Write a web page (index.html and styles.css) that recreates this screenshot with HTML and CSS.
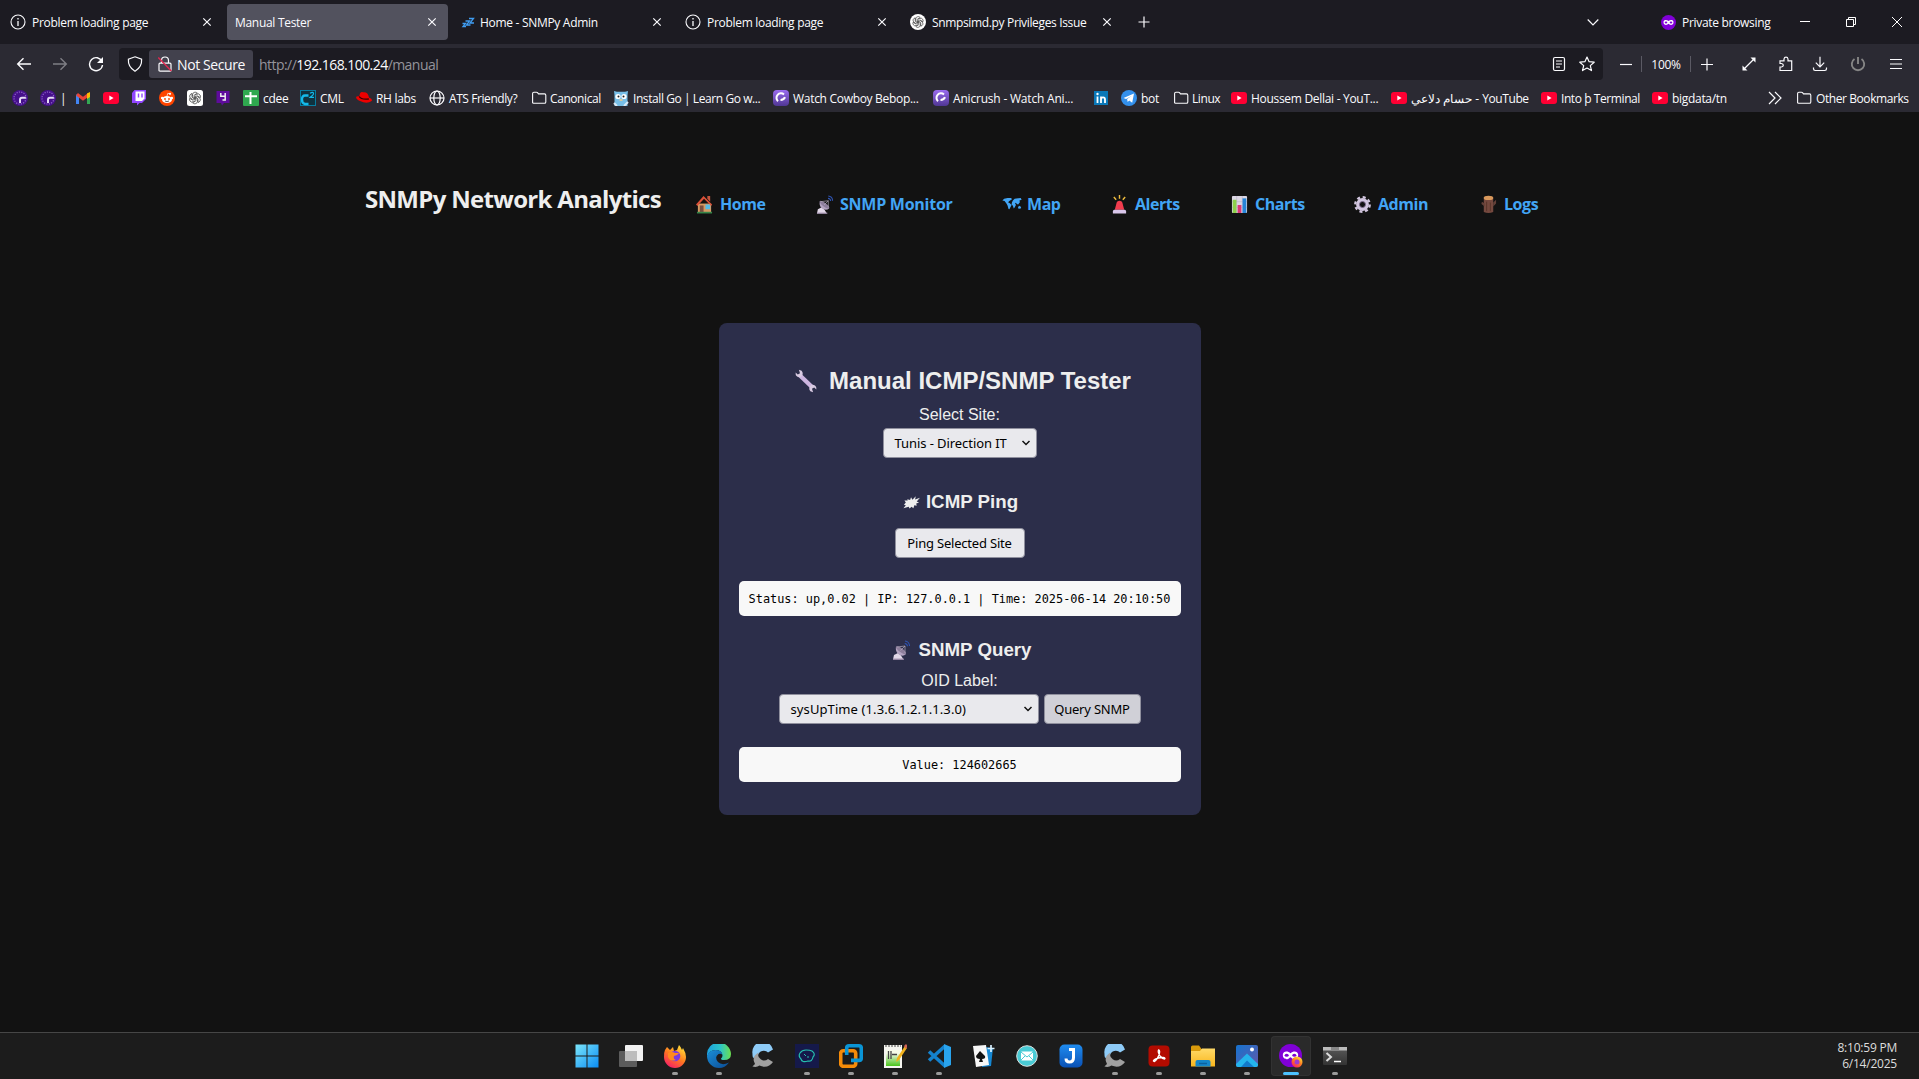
FILE: index.html
```html
<!DOCTYPE html>
<html lang="en">
<head>
<meta charset="utf-8">
<title>Manual Tester</title>
<link rel="stylesheet" href="styles.css">
</head>
<body>
<svg class="defs" aria-hidden="true">
  <defs>
    <linearGradient id="gWin" x1="0" y1="0" x2="1" y2="1"><stop offset="0" stop-color="#7be6fb"/><stop offset="1" stop-color="#0a8cf4"/></linearGradient>
    <linearGradient id="gFox" x1=".8" y1="0" x2=".2" y2="1"><stop offset="0" stop-color="#ffe53b"/><stop offset=".5" stop-color="#ff7a1f"/><stop offset="1" stop-color="#f5176c"/></linearGradient>
    <linearGradient id="gEdge" x1="0" y1=".4" x2="1" y2=".4"><stop offset="0" stop-color="#1ba1e0"/><stop offset=".55" stop-color="#2cc4c9"/><stop offset="1" stop-color="#6be04f"/></linearGradient>
    <linearGradient id="gEdge2" x1="0" y1="0" x2="1" y2="1"><stop offset="0" stop-color="#1a8fd8"/><stop offset="1" stop-color="#0b4b94"/></linearGradient>
    <linearGradient id="gAni" x1="0" y1="0" x2="0" y2="1"><stop offset="0" stop-color="#9a6cf0"/><stop offset="1" stop-color="#4f3693"/></linearGradient>
    <linearGradient id="gFold" x1="0" y1="0" x2="0" y2="1"><stop offset="0" stop-color="#ffda68"/><stop offset="1" stop-color="#f9b61d"/></linearGradient>
    <linearGradient id="gPic" x1="0" y1="0" x2="1" y2="1"><stop offset="0" stop-color="#1573cf"/><stop offset="1" stop-color="#6458a8"/></linearGradient>
    <linearGradient id="gJ" x1="0" y1="0" x2="0" y2="1"><stop offset="0" stop-color="#1f8cf0"/><stop offset="1" stop-color="#0a51b5"/></linearGradient>
    <linearGradient id="gTerm" x1="0" y1="0" x2="0" y2="1"><stop offset="0" stop-color="#5a5a5a"/><stop offset="1" stop-color="#333"/></linearGradient>
    <linearGradient id="gNpp" x1="0" y1="0" x2="0" y2="1"><stop offset=".2" stop-color="#f6fbe8"/><stop offset="1" stop-color="#49c41b"/></linearGradient>
    <symbol id="info" viewBox="0 0 16 16"><circle cx="8" cy="8" r="7" fill="none" stroke="#fbfbfe" stroke-width="1.1"/><path d="M8 7v5M8 4v1.4" stroke="#fbfbfe" stroke-width="1.3"/></symbol>
    <symbol id="x" viewBox="0 0 10 10"><path d="M1.3 1.3l7.4 7.4M8.7 1.3L1.3 8.7" stroke="#fbfbfe" stroke-width="1.2"/></symbol>
    <symbol id="folder" viewBox="0 0 16 16"><path d="M1.6 13V3.5q0-1.300 1.300-1.300h2.600q.6 0 1 .5l1 1.200h6q1.300 0 1.300 1.300V12q0 1.300-1.300 1.300H2.600q-1 0-1-1z" fill="none" stroke="#fbfbfe" stroke-width="1.1"/></symbol>
    <symbol id="yt" viewBox="0 0 16 16"><rect y="2" width="16" height="12" rx="3" fill="#ff0033"/><path d="M6.300 5.600v4.800L10.600 8z" fill="#fff"/></symbol>
    <symbol id="gauge" viewBox="0 0 16 16"><circle cx="8" cy="8" r="8" fill="#45108a"/><circle cx="8" cy="8" r="6" fill="none" stroke="#8f62c8" stroke-width="1.200" stroke-dasharray="1.200 1.200"/><path d="M8 13V9.800Q8 7.800 10 7.800h3.800" fill="none" stroke="#e6dcf5" stroke-width="2"/></symbol>
    <symbol id="knot" viewBox="0 0 16 16"><g fill="none" stroke="#222" stroke-width=".7"><path id="petal" d="M5.200 6.400V4.200Q5.400 1.500 8 1.300q1.700 0 2.700 1.200L7 4.700v4.400"/><use href="#petal" transform="rotate(60 8 8)"/><use href="#petal" transform="rotate(120 8 8)"/><use href="#petal" transform="rotate(180 8 8)"/><use href="#petal" transform="rotate(240 8 8)"/><use href="#petal" transform="rotate(300 8 8)"/></g></symbol>
    <symbol id="ani" viewBox="0 0 16 16"><rect width="16" height="16" rx="4" fill="url(#gAni)"/><path d="M11 4.400A4.500 4.500 0 1 0 5 11.200M7.500 10q3.500 0 4.500-2.800" fill="none" stroke="#fff" stroke-width="2"/></symbol>
    <symbol id="dish" viewBox="0 0 18 20"><path d="M1 19.500L2 15l4-2 3 2.500 2.500 4z" fill="#e2d8e8"/><path d="M1 18.600h11v1.200H1z" fill="#9c8aa8"/><path d="M4 6.500Q3 12 7 14.500t7-.5z" fill="#b3a3c0"/><ellipse cx="9" cy="10.200" rx="2" ry="6.200" transform="rotate(-53 9 10.200)" fill="#8d7e9b"/><path d="M8.500 10.500L13 6M5 7l8-1M13 13V6" stroke="#b5abbd" stroke-width=".7" fill="none"/><path d="M12.700 3.500a3 3 0 0 1 2.800 2.800M13 1a5 5 0 0 1 4.500 5" stroke="#2f55b4" stroke-width="1.100" fill="none"/></symbol>
    <symbol id="cclaw" viewBox="0 0 24 24"><path d="M22 5.500A10.500 10.500 0 0 0 1.500 10q-.2 2 .6 4L7 11.300A6 6 0 0 1 17 8.500z" fill="#8ecbf7"/><path d="M6 9.500Q2 12 2.800 17L4 20l-2.600 2.600Q6 23.600 8.400 21.600 17 25 22 18l-5-3A6 6 0 0 1 7.500 8.400z" fill="#a0a0a0"/></symbol>
    <symbol id="mask" viewBox="0 0 24 24"><circle cx="12" cy="12" r="12" fill="#8000d7"/><path d="M12 9.600C9.400 7.200 4.400 7 4 11c-.2 4.400 3.400 5.400 5.400 4.600 1.300-.5 1.700-1.800 2.600-1.800s1.300 1.300 2.600 1.800c2 .8 5.600-.2 5.400-4.600-.4-4-5.400-3.800-8-1.400z" fill="#fff"/><ellipse cx="8" cy="11.800" rx="2.100" ry="1.600" fill="#8000d7"/><ellipse cx="16" cy="11.800" rx="2.100" ry="1.600" fill="#8000d7"/></symbol>
  </defs>
</svg>

<header class="browser">
  <div class="tabs">
    <div class="tab"><svg class="i16"><use href="#info"/></svg><span>Problem loading page</span><svg class="x"><use href="#x"/></svg></div>
    <div class="tab active"><span>Manual Tester</span><svg class="x"><use href="#x"/></svg></div>
    <div class="tab home"><svg class="i16" viewBox="0 0 16 16"><path d="M2.500 9.500h3L3 12.500h3M5.500 7h4l-3 4h4M9 4.500h4.500l-3.500 4.500h4" fill="none" stroke="#3f9df2" stroke-width="1.300"/></svg><span>Home - SNMPy Admin</span><svg class="x"><use href="#x"/></svg></div>
    <div class="tab"><svg class="i16"><use href="#info"/></svg><span>Problem loading page</span><svg class="x"><use href="#x"/></svg></div>
    <div class="tab snmp"><svg class="i16" viewBox="0 0 16 16"><circle cx="8" cy="8" r="8" fill="#fff"/><use href="#knot" x="1.500" y="1.500" width="13" height="13"/></svg><span>Snmpsimd.py Privileges Issue</span><svg class="x"><use href="#x"/></svg></div>
    <svg class="newtab" viewBox="0 0 12 12"><path d="M6 .5v11M.5 6h11" stroke="#fbfbfe" stroke-width="1.200"/></svg>
    <svg class="alltabs" viewBox="0 0 12 12"><path d="M.7 3.500L6 8.800l5.300-5.300" fill="none" stroke="#fbfbfe" stroke-width="1.200"/></svg>
    <div class="private"><svg class="i15"><use href="#mask"/></svg><span>Private browsing</span></div>
    <div class="winbtns">
      <svg viewBox="0 0 10 10"><path d="M0 4.500h10" stroke="#fff"/></svg>
      <svg viewBox="0 0 10 10"><path d="M.5 2.500h7v7h-7zM2.500 2.500v-2h7v7h-2" fill="none" stroke="#fff"/></svg>
      <svg viewBox="0 0 10 10"><path d="M0 0l10 10M10 0L0 10" stroke="#fff"/></svg>
    </div>
  </div>

  <div class="toolbar">
    <svg class="tb" viewBox="0 0 16 16"><path d="M15 8H1.700M7.500 2.300L1.700 8l5.800 5.700" fill="none" stroke="#fbfbfe" stroke-width="1.400"/></svg>
    <svg class="tb dim" viewBox="0 0 16 16"><path d="M1 8h13.300M8.500 2.300L14.300 8l-5.800 5.700" fill="none" stroke="#fbfbfe" stroke-width="1.400"/></svg>
    <svg class="tb" viewBox="0 0 16 16"><path d="M14 5.500A6.500 6.500 0 1 0 14.500 9" fill="none" stroke="#fbfbfe" stroke-width="1.400"/><path d="M15 1v6H9z" fill="#fbfbfe"/></svg>
    <div class="urlbar">
      <svg class="shield" viewBox="0 0 16 16"><path d="M8 .8l6.600 2.500Q15.200 11 8 15.200.8 11 1.400 3.300z" fill="none" stroke="#fbfbfe" stroke-width="1.200"/></svg>
      <div class="notsec"><svg class="i16" viewBox="0 0 16 16"><path d="M4.500 7V4.500a3.500 3.500 0 0 1 7 0V7M3 7.200h10q1 0 1 1v6q0 1-1 1H3q-1 0-1-1v-6q0-1 1-1z" fill="none" stroke="#fbfbfe" stroke-width="1.200"/><path d="M1.300 1.500l13 13.500" stroke="#e22850" stroke-width="1.400"/></svg><span>Not Secure</span></div>
      <div class="url">http://<b>192.168.100.24</b>/manual</div>
      <svg class="i16 reader" viewBox="0 0 16 16"><rect x="2.500" y="1.500" width="11" height="13" rx="1.500" fill="none" stroke="#fbfbfe" stroke-width="1.200"/><path d="M5 5h6M5 8h6M5 11h4" stroke="#fbfbfe" stroke-width="1.200"/></svg>
      <svg class="i16" viewBox="0 0 16 16"><path d="M8 1l2.100 4.700 5.100.5-3.900 3.400 1.200 5L8 12l-4.500 2.600 1.200-5L.8 6.200l5.100-.5z" fill="none" stroke="#fbfbfe" stroke-width="1.200" stroke-linejoin="round"/></svg>
    </div>
    <div class="tools">
      <svg viewBox="0 0 16 16"><path d="M2 8.500h12" stroke="#fbfbfe" stroke-width="1.200"/></svg>
      <i class="sep"></i><span class="pct">100%</span><i class="sep"></i>
      <svg viewBox="0 0 16 16"><path d="M8 2.500v12M2 8.500h12" stroke="#fbfbfe" stroke-width="1.200"/></svg>
      <svg viewBox="0 0 16 16"><path d="M3 13L13 3" stroke="#fbfbfe" stroke-width="1.300"/><path d="M9.500 1.500h5v5zM1.500 9.500v5h5z" fill="#fbfbfe"/></svg>
      <svg viewBox="0 0 16 16"><path d="M2 14.500V11h1.500q1.800-.2 1.800-1.700T3.500 7.500H2V4.800h4V3q.3-1.800 2-1.800T10 3v1.800h3.700v9.700z" fill="none" stroke="#fbfbfe" stroke-width="1.200"/></svg>
      <svg viewBox="0 0 16 16"><path d="M8 .8v10M3.800 6.700L8 10.900l4.200-4.200M1.500 11.500v1.300q0 1.700 1.700 1.700h9.600q1.700 0 1.700-1.700v-1.300" fill="none" stroke="#fbfbfe" stroke-width="1.200"/></svg>
      <svg viewBox="0 0 16 16"><path d="M4.500 3A6.200 6.200 0 1 0 11.500 3M8 1v7" fill="none" stroke="#858585" stroke-width="1.900"/></svg>
      <svg viewBox="0 0 16 16"><path d="M2 3.500h12M2 8h12M2 12.500h12" stroke="#fbfbfe" stroke-width="1.200"/></svg>
    </div>
  </div>

  <nav class="bookmarks">
    <a><svg><use href="#gauge"/></svg></a>
    <a><svg><use href="#gauge"/></svg><span>|</span></a>
    <a><svg viewBox="0 0 16 16"><path d="M2.500 14V4.500" stroke="#4285f4" stroke-width="3"/><path d="M13.500 14V4.500" stroke="#34a853" stroke-width="3"/><path d="M2 4.200l6 4.600 6-4.600" fill="none" stroke="#ea4335" stroke-width="3"/><path d="M12 3.500l3-1.500v5l-3 2z" fill="#fbbc04"/></svg></a>
    <a><svg><use href="#yt"/></svg></a>
    <a><svg viewBox="0 0 16 16"><path d="M3.500 0H15v9l-4 4H8.500L6 15.600V13H1V3z" fill="#9146ff"/><path d="M4.500 1.500h9v7L11 11H4.500z" fill="#fff"/><path d="M7.500 3.500v4M11 3.500v4" stroke="#9146ff" stroke-width="1.400"/></svg></a>
    <a><svg viewBox="0 0 16 16"><circle cx="8" cy="8" r="8" fill="#ff4500"/><ellipse cx="8" cy="9.500" rx="5" ry="3.600" fill="#fff"/><circle cx="3.200" cy="8" r="1.300" fill="#fff"/><circle cx="12.800" cy="8" r="1.300" fill="#fff"/><circle cx="11" cy="3.800" r="1.100" fill="#fff"/><path d="M8 6l.8-2.700 2 .5" stroke="#fff" stroke-width=".7" fill="none"/><circle cx="6" cy="9" r=".9" fill="#ff4500"/><circle cx="10" cy="9" r=".9" fill="#ff4500"/><path d="M6 11q2 1.200 4 0" stroke="#222" stroke-width=".7" fill="none"/></svg></a>
    <a><svg viewBox="0 0 16 16"><rect width="16" height="16" rx="2.500" fill="#fff"/><use href="#knot" x="1" y="1" width="14" height="14"/></svg></a>
    <a><svg viewBox="0 0 16 16"><path d="M1.500 1h13v12H9l-2 2.500L6 13H1.500z" fill="#5e0b9c"/><path d="M5.800 3v3.300h4.400V3M10.200 6v4H7.500" fill="none" stroke="#eee" stroke-width="1.500"/></svg></a>
    <a><svg viewBox="0 0 16 16"><rect width="16" height="16" rx="1" fill="#2fa84f"/><path d="M7.500 2v12M2 6.300h12" stroke="#fff" stroke-width="2"/></svg><span>cdee</span></a>
    <a><svg viewBox="0 0 16 16"><rect x=".5" y=".5" width="15" height="15" fill="#10323f" stroke="#087ca0"/><path d="M8.500 5.500H5q-3 0-3 4t3 4.500h3.500" stroke="#14b9ea" stroke-width="2.300" fill="none"/><path d="M10 3.200q3.500-2 3.500.5 0 1-3.300 3.600H14" stroke="#14b9ea" stroke-width="1.200" fill="none"/></svg><span>CML</span></a>
    <a><svg viewBox="0 0 16 16"><path d="M4 3.500q1-2 3-1.300 5-.7 6 5.300 4 1.500 2.600 3.600Q11 14.500 4 11-.5 9 .3 6.800 1 5.800 3.200 6.300z" fill="#e00"/><path d="M3.200 6.500q2 3.500 9.600 2.500" stroke="#300" stroke-width="1.300" fill="none"/></svg><span>RH labs</span></a>
    <a><svg viewBox="0 0 16 16"><g fill="none" stroke="#fbfbfe" stroke-width="1.200"><circle cx="8" cy="8" r="7"/><ellipse cx="8" cy="8" rx="3.200" ry="7"/><path d="M1 8h14"/></g></svg><span class="tight">ATS Friendly?</span></a>
    <a><svg><use href="#folder"/></svg><span class="tight pull">Canonical</span></a>
    <a><svg viewBox="0 0 16 16"><path d="M1 1l3 .8h8L15 1l-.5 4v11h-13V5z" fill="#78bfe8"/><circle cx="5" cy="6.500" r="2.600" fill="#fff"/><circle cx="11" cy="6.500" r="2.600" fill="#fff"/><circle cx="5.500" cy="6.500" r="1" fill="#222"/><circle cx="10.500" cy="6.500" r="1" fill="#222"/><path d="M6.500 9h3v2h-3z" fill="#d6c8a0"/><path d="M1 13l3 3M15 12l-4 4" stroke="#dbeaf6" stroke-width="2"/></svg><span class="tight">Install Go | Learn Go w...</span></a>
    <a><svg><use href="#ani"/></svg><span>Watch Cowboy Bebop...</span></a>
    <a><svg><use href="#ani"/></svg><span class="loose">Anicrush - Watch Ani...</span></a>
    <a><svg viewBox="0 0 16 16"><rect x="1" y="1" width="14" height="14" fill="#0a78b8"/><path d="M4.500 6.500V13M8 6.500V13M8 13V9.500Q8 7.300 10 7.300T12 9.500V13" fill="none" stroke="#fff" stroke-width="1.800"/><circle cx="4.500" cy="4" r="1.200" fill="#fff"/></svg></a>
    <a><svg viewBox="0 0 16 16"><circle cx="8" cy="8" r="8" fill="#3390ec"/><path d="M2.500 8l10.500-4.500-1.800 9.300-3-2.300-1.500 1.500-.6-3L10.500 6 5 9z" fill="#fff"/></svg><span>bot</span></a>
    <a><svg><use href="#folder"/></svg><span class="tight pull">Linux</span></a>
    <a><svg><use href="#yt"/></svg><span>Houssem Dellai - YouT...</span></a>
    <a><svg><use href="#yt"/></svg><span class="tight">حسام دلاعي - YouTube</span></a>
    <a><svg><use href="#yt"/></svg><span class="tight">Into þ Terminal</span></a>
    <a><svg><use href="#yt"/></svg><span>bigdata/tn</span></a>
    <a><svg viewBox="0 0 16 16"><path d="M3 2l6 6-6 6M9 2l6 6-6 6" fill="none" stroke="#fbfbfe" stroke-width="1.200"/></svg></a>
    <a><svg><use href="#folder"/></svg><span class="tight">Other Bookmarks</span></a>
  </nav>
</header>

<main class="page">
  <div class="sitehead">
    <h1>SNMPy Network Analytics</h1>
    <nav class="links">
      <a><svg viewBox="0 0 18 20"><path d="M2 9h14v9H2z" fill="#d69a63"/><path d="M0 10L8 1l9 9-1 1.500L8.500 4 1.500 11.500z" fill="#dc5139"/><path d="M12 1h3v6l-3-3z" fill="#c4553d"/><path d="M4 11h4v7H4z" fill="#7b4f41"/><path d="M10 10h5v5h-5z" fill="#56bce8"/><path d="M1 17.700h16v1.800H1z" fill="#37864a"/></svg><span>Home</span></a>
      <a><svg><use href="#dish"/></svg><span class="mon">SNMP Monitor</span></a>
      <a><svg class="wide" viewBox="0 0 22 16"><path d="M0 4l2-2 4-1 4 0 1 1.500-3 2-1.500 1.500 2 1 2 2-1 2-1.500 3-1-.3-1-3.700-1-2L4 6.500 2.500 4.500zM11 6l1-2 2-2 7-1 1 2-2.500 1 .5 2-2 2.500-1.500-.5-1-1.500-1 .5 1 2-1.500 3-1 1-1-3-1.500-1.500zM18 11l2-1 1.500 2-1 1.500-2.500-.5z" fill="#42a5f5"/></svg><span>Map</span></a>
      <a><svg viewBox="0 0 18 20"><path d="M9 0v4M3 2l2.500 3M15 2l-2.500 3" stroke="#eebc3e" stroke-width="1.500"/><path d="M4 15.500L6 8q.5-2 3-2t3 2l2 7.500z" fill="#f23c4d"/><path d="M2 17.500q0-2 1.500-2h11q1.500 0 1.500 2v2H2z" fill="#d9c7ea"/></svg><span>Alerts</span></a>
      <a><svg viewBox="0 0 18 20"><rect x="1" y="1" width="16" height="18" rx="1" fill="#dcd7e4"/><path d="M1 7h16M1 13h16M6 1v18M12 1v18" stroke="#b8b0c6" stroke-width=".6"/><path d="M1.800 5h4v14h-4z" fill="#8ed14a"/><path d="M7 10.500h4V19H7z" fill="#dc3976"/><path d="M12.200 3.500h4V19h-4z" fill="#2684d8"/></svg><span>Charts</span></a>
      <a><svg viewBox="0 0 18 20"><circle cx="9" cy="10" r="5" fill="none" stroke="#d2c6df" stroke-width="3.600"/><circle cx="9" cy="10" r="7.700" fill="none" stroke="#d2c6df" stroke-width="2.400" stroke-dasharray="3.200 2.840"/><circle cx="9" cy="10" r="3.200" fill="none" stroke="#806d91"/></svg><span>Admin</span></a>
      <a><svg viewBox="0 0 18 20"><path d="M4 2h10v16q-5 2-10 0z" fill="#75493f"/><path d="M2 7l3 2v3L1.500 9.500zM14 8l3-3v4l-3 3z" fill="#634038"/><ellipse cx="9" cy="3" rx="5" ry="2.300" fill="#d9995c"/><path d="M7 7v10M11 8v9" stroke="#593429"/></svg><span>Logs</span></a>
    </nav>
  </div>

  <section class="card">
    <h2><svg viewBox="0 0 22 22"><path d="M5.500 6L16.500 16.500" stroke="#cdb5e0" stroke-width="4"/><path d="M1.500 3.200q-.5 4.500 4.500 4.300Q9.500 4.500 7 1.500L4.500.7l1 3.300-2 1z" fill="#d9cbe2"/><path d="M20.500 18.800q.5-4.500-4.500-4.300-3.500 3-1 6l2.500.8-1-3.300 2-1z" fill="#d9cbe2"/></svg><span>Manual ICMP/SNMP Tester</span></h2>
    <label>Select Site:</label>
    <div class="select site"><span>Tunis - Direction IT</span><svg viewBox="0 0 10 8"><path d="M1.500 2L5 5.500 8.500 2" fill="none" stroke="#111" stroke-width="1.500"/></svg></div>
    <h3 class="ping"><svg viewBox="0 0 18 14"><path d="M3 7.500L1.500 5.500 5 5.500 4.500 4 7.500 5 8.500 2 10 4.500 13.500.8 12.800 4.300 18 2.500 14.500 6.500 17 7.500 14 8.500 14.500 11 12 10.500 11 13.500 9 12 7 13.800 6 12 .5 13.500 3 10.500 1 10z" fill="#eee"/></svg><span>ICMP Ping</span></h3>
    <button class="btn pingbtn"><span>Ping Selected Site</span></button>
    <pre class="out first">Status: up,0.02 | IP: 127.0.0.1 | Time: 2025-06-14 20:10:50</pre>
    <h3 class="query"><svg><use href="#dish"/></svg><span>SNMP Query</span></h3>
    <label>OID Label:</label>
    <div class="row">
      <div class="select oid"><span>sysUpTime (1.3.6.1.2.1.1.3.0)</span><svg viewBox="0 0 10 8"><path d="M1.500 2L5 5.500 8.500 2" fill="none" stroke="#111" stroke-width="1.500"/></svg></div>
      <button class="btn hover"><span>Query SNMP</span></button>
    </div>
    <pre class="out second">Value: 124602665</pre>
  </section>
</main>

<footer class="taskbar">
  <div class="apps">
    <a><svg viewBox="0 0 24 24"><path d="M.5.5h11v11H.5zM12.500.5h11v11h-11zM.5 12.500h11v11H.5zM12.500 12.500h11v11h-11z" fill="url(#gWin)"/></svg></a>
    <a><svg viewBox="0 0 24 24"><rect x="6" y="1" width="18" height="16" rx="1" fill="#f2f2f2"/><rect y="7" width="18" height="16" rx="1" fill="#5c5c5c"/><path d="M6 7h12v10H6z" fill="#bdbdbd"/></svg></a>
    <a class="run"><svg viewBox="0 0 24 24"><path d="M2 6l2-3 3 3 3-3 1 4 3-1 2-5q2 2 3 5l1-2q3 5 3 9a11 11 0 0 1-22 0Q.7 9 2 6z" fill="url(#gFox)"/><circle cx="12" cy="12" r="5.300" fill="#7a3ae0"/><path d="M5 9q4-2 7 0l4 0q-2 3-5 3-1 3 2 4-6 2-8-3z" fill="#ff8a1e"/></svg></a>
    <a class="run"><svg viewBox="0 0 24 24"><path d="M0 11A12 12 0 0 1 24 10q0 6-7 6-3 0-3-1.500 1.500-1 1.500-3Q15 6 8.500 6 2 6 0 13z" fill="url(#gEdge)"/><path d="M0 12Q2 6 8.500 6q6 0 7 5Q14 9 11.500 10 7 13 11 18q4 4 11 .5Q18 24 12 24A12 12 0 0 1 0 12z" fill="url(#gEdge2)"/></svg></a>
    <a><svg><use href="#cclaw"/></svg></a>
    <a class="run"><svg viewBox="0 0 24 24"><path d="M0 0h24v24H0z" fill="#15194a"/><path d="M5 9q2-3 6-3t6 1q4 3 1 6-1 5-5 4-6 2-7-2-3-3-1-6z" fill="none" stroke="#26bfae" stroke-width="1.200"/><path d="M9 10l2 2M12 13h2" stroke="#26bfae"/></svg></a>
    <a class="run"><svg viewBox="0 0 24 24"><rect x="1.700" y="6.700" width="15" height="15.600" rx="2.500" fill="none" stroke="#f68b08" stroke-width="3.600"/><path d="M7.700 11V4.200Q7.700 1.800 10 1.800h10q2.300 0 2.300 2.300v10q0 2.300-2.300 2.300H12" fill="none" stroke="#0a95d6" stroke-width="3.600"/></svg></a>
    <a class="run"><svg viewBox="0 0 24 24"><path d="M1 1h18v23H1z" fill="#f5f5f0"/><path d="M3 6h14v16H3z" fill="url(#gNpp)"/><path d="M2 2h16" stroke="#454545" stroke-dasharray="2 1"/><path d="M5.500 7v8M8 7v8M9 10.500h5" stroke="#454545" stroke-width="1.300"/><path d="M13 18l1-4 8-12 2 2-8 12z" fill="#f2b21d"/><path d="M21 2l2-2 1.500 2L23 5z" fill="#d36456"/></svg></a>
    <a class="run"><svg viewBox="0 0 24 24"><path d="M2 7.500L18 22M2 16.500L18 2" stroke="#1482ce" stroke-width="3.600"/><path d="M17 0l7 3v18l-7 3z" fill="#29a4ee"/></svg></a>
    <a><svg viewBox="0 0 24 24"><path d="M13 3l9 1-2 18-9 1z" fill="#1588d3"/><path d="M2 2l13-1 3 20-13 2z" fill="#f7f7f7"/><path d="M9 7l5 5q1 3-3 3l1 3H8l1-3q-4 0-4-3z" fill="#111"/><path d="M20 1v7M16.500 4.500h7" stroke="#d9f1ff" stroke-width="1.700"/></svg></a>
    <a><svg viewBox="0 0 24 24"><circle cx="12" cy="12" r="10.300" fill="#49cbd5" stroke="#d9dedd" stroke-width="1"/><rect x="6" y="7.500" width="12" height="9" rx="1" fill="#fff"/><path d="M6 8l6 5 6-5M6 16l4-4M18 16l-4-4" fill="none" stroke="#49cbd5"/></svg></a>
    <a><svg viewBox="0 0 24 24"><rect x=".5" y=".5" width="23" height="23" rx="5" fill="url(#gJ)"/><path d="M10 5.500h6M14.500 4.500v9q0 4.500-4 4.500-3.500 0-3.500-3.500" fill="none" stroke="#fff" stroke-width="3"/></svg></a>
    <a class="run"><svg><use href="#cclaw"/></svg></a>
    <a class="run"><svg viewBox="0 0 24 24"><rect x="1.500" y="1.500" width="21" height="21" rx="4" fill="#b30b00"/><path d="M11.500 6q2 0 .5 5-2 5-4.500 6.500-2 0-.5-1.500 2-2 9-2.500 3 .5 1.500 1.500-2 0-4.500-3-2.500-4-1.500-6z" fill="none" stroke="#fff" stroke-width="1.300"/></svg></a>
    <a class="run"><svg viewBox="0 0 24 24"><path d="M0 3q0-1.500 1.500-1.500H8L10.500 5H24v4H0z" fill="#d99a0b"/><path d="M0 7h9l2-2.500h13V22.500H0z" fill="url(#gFold)"/><path d="M4.500 22.500V18q0-2 2-2h11q2 0 2 2v4.500z" fill="#1486c9"/><path d="M8 19.500h8" stroke="#0b62a0" stroke-width="1.500"/></svg></a>
    <a class="run"><svg viewBox="0 0 24 24"><rect x="1" y="1" width="22" height="22" rx="2" fill="url(#gPic)"/><path d="M1 20L12 9.500 23 20v1q0 2-2 2H3q-2 0-2-2z" fill="#24b4ed"/><path d="M6 23l6-6.500L19 23z" fill="#1279ca"/><circle cx="17" cy="5.500" r="2" fill="#fff"/></svg></a>
    <a class="run current"><svg viewBox="0 0 24 24"><use href="#mask" width="23" height="23"/><circle cx="18" cy="18" r="5.500" fill="url(#gFox)"/><circle cx="18" cy="18" r="2.500" fill="#a03ad0"/></svg></a>
    <a class="run"><svg viewBox="0 0 24 24"><rect y="3" width="24" height="18" rx="1" fill="url(#gTerm)"/><path d="M0 3h24v3.500H0z" fill="#bbb"/><path d="M8 3h8v3.500H8z" fill="#888"/><path d="M3.500 9l4.500 4-4.500 4" fill="none" stroke="#ddd" stroke-width="2"/><path d="M11 17.500h7" stroke="#fff" stroke-width="1.500"/></svg></a>
  </div>
  <div class="clock"><span>8:10:59 PM</span><span>6/14/2025</span></div>
</footer>
</body>
</html>
```
FILE: styles.css
```css
* { box-sizing: border-box; }
body {
  margin: 0;
  height: 1079px;
  display: flex;
  flex-direction: column;
  overflow: hidden;
  background: #121212;
  color: #fbfbfe;
  font-family: "Open Sans", "Noto Sans", sans-serif;
  font-size: 12px;
}
.defs { position: absolute; width: 0; height: 0; }
svg { display: block; flex: none; }
span { white-space: nowrap; }
.i16 { width: 16px; height: 16px; }
.i15 { width: 15px; height: 15px; }

/* browser chrome */
.browser { height: 112px; background: #2b2a33; flex: none; letter-spacing: -0.3px; }
.tabs { height: 44px; background: #1c1b22; display: flex; align-items: center; padding-left: 2px; }
.tab { width: 221px; height: 36px; margin-right: 4px; padding: 0 11px 0 8px; display: flex; align-items: center; gap: 6px; border-radius: 4px; }
.tab .x { width: 10px; height: 10px; margin-left: auto; }
.tab.active { background: #52525e; }
.tab.home span { margin-left: -2px; }
.tab.snmp { letter-spacing: -0.35px; }
.newtab { width: 12px; height: 12px; margin-left: 11px; }
.alltabs { width: 12px; height: 12px; margin-left: 437px; }
.private { display: flex; align-items: center; gap: 6px; width: 139px; margin-left: 62px; }
.winbtns { display: flex; gap: 36px; }
.winbtns svg { width: 10px; height: 10px; }

.toolbar { height: 40px; display: flex; align-items: center; padding-left: 16px; }
.tb { width: 16px; height: 16px; margin-right: 20px; }
.tb.dim { opacity: .4; }
.urlbar { width: 1484px; height: 32px; flex: none; margin-left: -5px; padding: 0 8px; display: flex; align-items: center; background: #1c1b22; border-radius: 4px; font-size: 14px; }
.shield { width: 16px; height: 16px; margin-right: 6px; }
.notsec { width: 104px; height: 28px; padding-left: 8px; display: flex; align-items: center; gap: 4px; background: #42414d; border-radius: 3px; letter-spacing: -0.4px; }
.url { margin-left: 6px; flex: 1; color: #94939b; letter-spacing: -0.55px; }
.url b { font-weight: 400; color: #fbfbfe; }
.reader { margin-right: 12px; }
.tools { padding-left: 8px; display: grid; grid-template-columns: 30px 1px 48px 1px 31px 53px 21px 48px 28px 47px; align-items: center; justify-items: center; }
.tools svg { width: 16px; height: 16px; }
.sep { width: 1px; height: 16px; background: #5b5a64; }

.bookmarks { height: 28px; display: grid; padding-left: 12px; align-items: center;
  grid-template-columns: 28px 35px 28px 28px 28px 28px 28px 28px 57px 56px 73px 102px 82px 160px 160px 160px 28px 52px 58px 160px 150px 111px 114px 30px 1fr; }
.bookmarks a { display: flex; align-items: center; gap: 4px; }
.bookmarks svg { width: 16px; height: 16px; }
.bookmarks .tight { letter-spacing: -0.42px; }
.bookmarks .loose { letter-spacing: -0.2px; }
.bookmarks .pull { margin-left: -1px; }

/* page */
.page { height: 920px; display: flex; flex-direction: column; align-items: center; color: #eee; }
.sitehead { width: 1189px; height: 211px; padding-top: 69px; display: flex; align-items: flex-start; }
h1 { margin: 0; width: 331px; font: 700 24px/36px "Open Sans", "Noto Sans", sans-serif; letter-spacing: -0.68px; white-space: nowrap; }
.links { padding-top: 11px; display: grid; grid-template-columns: 120px 187px 108px 120px 123px 126px 60px; font-size: 16px; font-weight: 700; line-height: 24px; color: #42a5f5; letter-spacing: -0.45px; }
.links a { display: flex; align-items: center; gap: 7px; }
.links svg { width: 17px; height: 19px; }
.links .mon { letter-spacing: -0.25px; }
.links .wide { width: 22px; height: 14px; margin-left: -2px; margin-right: -3px; }

.card { width: 482px; height: 492px; padding: 0 20px; border-radius: 8px; background: #2c2e4a; display: flex; flex-direction: column; align-items: center; font-family: "Liberation Sans", Arial, sans-serif; }
h2, h3 { margin: 0; display: flex; align-items: center; }
h2 { height: 28px; margin-top: 44px; padding-left: 6px; font-size: 24px; gap: 11px; }
h2 svg { width: 24px; height: 24px; }
label { font-size: 16px; line-height: 18px; }
.card > label:nth-of-type(1) { margin-top: 11px; }
.select, .btn { height: 30px; border: 1px solid #8f8f9d; border-radius: 4px; background: #e9e9ed; color: #000; font: 13px "Noto Sans", sans-serif; display: flex; align-items: center; }
.select { padding: 0 5px 0 11px; justify-content: space-between; }
.select svg { width: 10px; height: 8px; }
.site { width: 154px; margin-top: 4px; letter-spacing: -0.07px; }
.oid { width: 260px; letter-spacing: 0.1px; }
.btn { padding: 0; justify-content: center; letter-spacing: -0.2px; }
.pingbtn { width: 130px; margin-top: 15px; }
.hover { width: 97px; background: #d0d0d7; }
h3 { font-size: 18.72px; line-height: 22px; gap: 6px; }
.ping { margin-top: 33px; padding-left: 2px; }
.ping svg { width: 17px; height: 14px; }
.out { width: 442px; height: 35px; margin: 23px 0 0; border-radius: 5px; background: #f8f8f8; color: #000; text-align: center; font: 11.88px/37px "DejaVu Sans Mono", monospace; }
.query { margin-top: 23px; padding-left: 4px; gap: 9px; }
.query svg { width: 18px; height: 20px; }
.query + label { margin-top: 11px; }
.row { display: flex; gap: 5px; margin-top: 4px; }

/* taskbar */
.taskbar { height: 47px; background: #1c1c1c; border-top: 1px solid #464646; display: grid; grid-template-columns: 565px 1fr auto; }
.apps { grid-column: 2; display: flex; padding-top: 3px; }
.apps a { width: 40px; height: 40px; margin: 0 2px; padding: 8px 8px 0; display: flex; flex-direction: column; align-items: center; border-radius: 4px; }
.apps svg { width: 24px; height: 24px; }
.apps .run::after { content: ""; width: 6px; height: 3px; margin-top: 4px; border-radius: 2px; background: #9a9a9a; flex: none; }
.apps .current { background: #2a2a2a; box-shadow: inset 0 0 0 1px #323232; }
.apps .current::after { width: 16px; background: #4cc2ff; }
.clock { padding: 7px 22px 0 0; display: flex; flex-direction: column; align-items: flex-end; line-height: 16px; color: #ddd; letter-spacing: -0.22px; }
```
